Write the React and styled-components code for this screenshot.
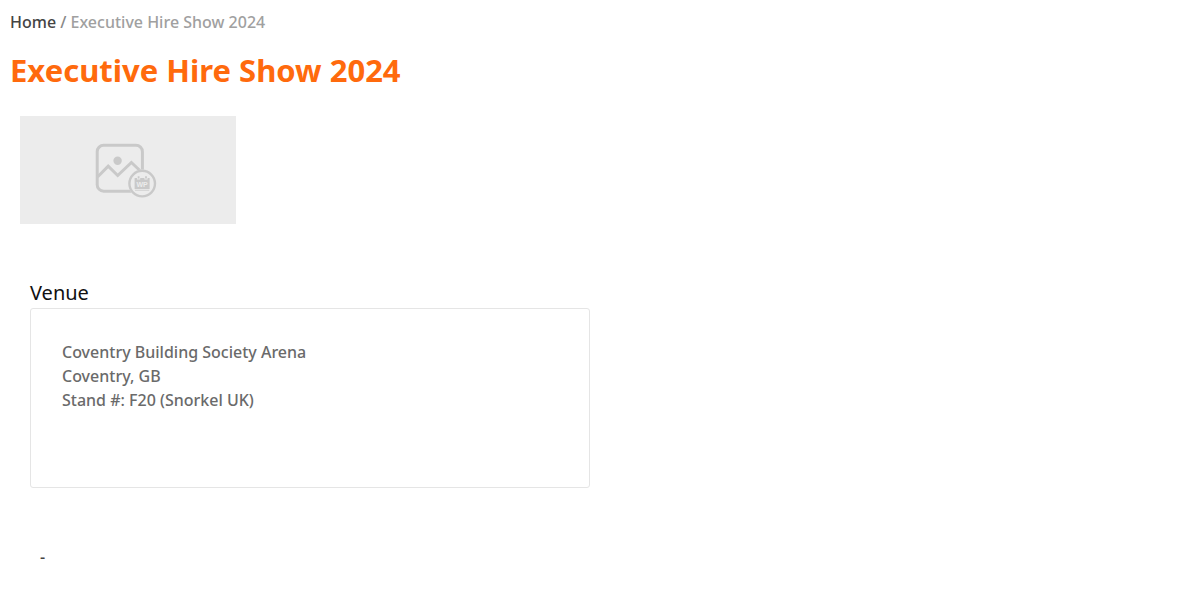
import React from "react";
import styled, { createGlobalStyle } from "styled-components";

const GlobalStyle = createGlobalStyle`
  *, *::before, *::after { box-sizing: border-box; }
  body {
    margin: 0;
    background: #fff;
    color: #6a6a6a;
    font-family: "Noto Sans", "Open Sans", sans-serif;
    font-size: 16px;
    font-weight: 500;
    line-height: 24px;
  }
`;

const Page = styled.main`
  padding: 10px;
`;

const Breadcrumb = styled.nav`
  color: #888;
`;

const HomeLink = styled.a`
  color: #444;
  text-decoration: none;
`;

const Current = styled.span`
  color: #a0a0a0;
`;

const Title = styled.h1`
  margin: 14px 0 24px;
  color: #ff6a0d;
  font-size: 31px;
  font-weight: 700;
  line-height: 44px;
`;

const Logo = styled.figure`
  display: flex;
  align-items: center;
  justify-content: center;
  width: 216px;
  height: 108px;
  margin: 0 10px 54px;
  background: #ececec;
`;

const Columns = styled.div`
  display: grid;
  grid-template-columns: 1fr 1fr;
  padding: 0 10px;
`;

const Venue = styled.section`
  padding: 0 10px;
`;

const VenueTitle = styled.h2`
  margin: 0;
  color: #111;
  font-size: 20px;
  font-weight: 400;
  line-height: 30px;
`;

const Card = styled.address`
  min-height: 180px;
  padding: 31px;
  border: 1px solid #e5e5e5;
  border-radius: 3px;
  font-style: normal;
`;

const Line = styled.div``;

const Description = styled.p`
  margin: 57px 30px 20px;
  color: #444;
`;

const WpText = styled.text`
  font-family: "Liberation Sans", sans-serif;
  font-size: 7px;
  font-weight: 700;
`;

function PlaceholderIcon() {
  return (
    <svg width="66" height="56" viewBox="0 0 66 56" role="img" aria-label="No image">
      <g fill="none" stroke="#c9c9c9" strokeWidth="3">
        <rect x="2.2" y="3.2" width="45.2" height="46" rx="6.5" />
        <path d="M2.5 35 L13.2 24.2 L22.7 33.5 L36.4 20.5 L47 30.5" />
      </g>
      <circle cx="22.6" cy="18.7" r="4.2" fill="#c9c9c9" />
      <circle cx="47.2" cy="41.6" r="14" fill="#ececec" />
      <circle cx="47.2" cy="41.6" r="12.8" fill="none" stroke="#c9c9c9" strokeWidth="2.4" />
      <path d="M39.6 36h2.4v1.6h3.2V36h4.2v1.6h3.2V36h2v11h-15z" fill="#c9c9c9" />
      <path d="M40 48.3h14.2" stroke="#d2d2d2" strokeWidth="1" />
      <path d="M43.6 34.2v2.2M51 34.2v2.2" stroke="#c9c9c9" strokeWidth="1.8" />
      <WpText x="47.1" y="45" textAnchor="middle" fill="#ececec">WP</WpText>
    </svg>
  );
}

const venueLines = [
  "Coventry Building Society Arena",
  "Coventry, GB",
  "Stand #: F20 (Snorkel UK)",
];

export default function App() {
  return (
    <>
      <GlobalStyle />
      <Page>
        <Breadcrumb aria-label="Breadcrumb">
          <HomeLink href="#">Home</HomeLink> / <Current>Executive Hire Show 2024</Current>
        </Breadcrumb>
        <Title>Executive Hire Show 2024</Title>
        <Logo>
          <PlaceholderIcon />
        </Logo>
        <Columns>
          <Venue>
            <VenueTitle>Venue</VenueTitle>
            <Card>
              {venueLines.map((line) => (
                <Line key={line}>{line}</Line>
              ))}
            </Card>
          </Venue>
        </Columns>
        <Description>-</Description>
      </Page>
    </>
  );
}
